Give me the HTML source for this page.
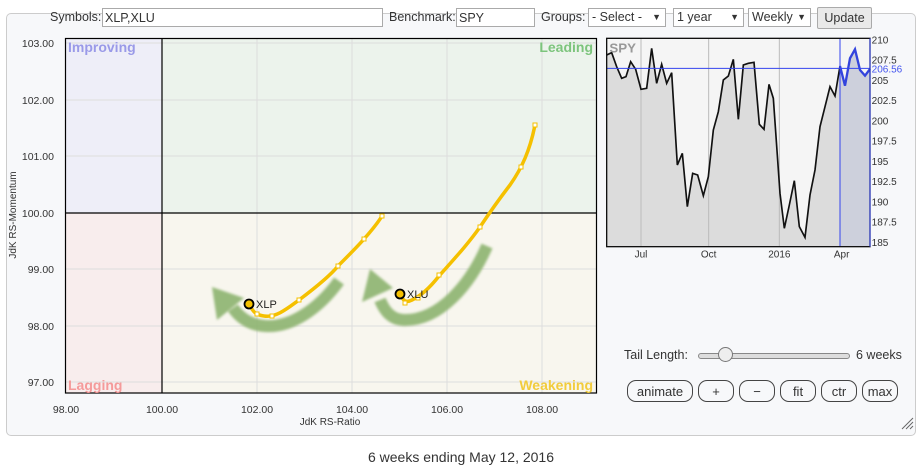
<!DOCTYPE html>
<html><head><meta charset="utf-8"><style>
body{margin:0;width:922px;height:468px;background:#fff;font-family:"Liberation Sans",sans-serif;position:relative;overflow:hidden;color:#333}
.panel{position:absolute;left:6px;top:13px;width:908px;height:421px;border:1px solid #ccc;border-radius:5px;background:#f7f8fa}
.lbl{position:absolute;font-size:12.5px;color:#333}
.inp{position:absolute;height:19px;border:1px solid #aaa;background:#fff;font-size:12.5px;line-height:19px;padding-left:2px;box-sizing:border-box}
.sel{position:absolute;height:19px;border:1px solid #aaa;background:#fff;font-size:12.5px;line-height:17px;padding-left:3px;box-sizing:border-box}
.sel:after{content:"▼";position:absolute;right:4px;top:0;font-size:9px}
.btn{position:absolute;top:380px;height:22px;border:1px solid #444;border-radius:9px;font-size:13px;line-height:21px;text-align:center;box-sizing:border-box;background:#f7f8fa}
</style></head><body>
<div class="panel"></div>
<div class="lbl" style="left:50px;top:10px">Symbols:</div>
<div class="inp" style="left:102px;top:8px;width:281px">XLP,XLU</div>
<div class="lbl" style="left:389px;top:10px">Benchmark:</div>
<div class="inp" style="left:456px;top:8px;width:79px">SPY</div>
<div class="lbl" style="left:541px;top:10px">Groups:</div>
<div class="sel" style="left:588px;top:8px;width:78px">- Select -</div>
<div class="sel" style="left:673px;top:8px;width:71px">1 year</div>
<div class="sel" style="left:748px;top:8px;width:63px">Weekly</div>
<div style="position:absolute;left:817px;top:7px;width:55px;height:22px;border:1px solid #aaa;border-radius:2px;background:#e9e9e9;font-size:12.5px;line-height:21px;text-align:center;box-sizing:border-box">Update</div>

<svg style="position:absolute;left:0;top:0" width="922" height="468">
<defs><filter id="sh" x="-20%" y="-20%" width="140%" height="140%"><feGaussianBlur stdDeviation="1.2"/></filter></defs>
<rect x="65" y="38" width="97" height="175" fill="#eeeef8"/>
<rect x="162" y="38" width="435" height="175" fill="#ecf3ec"/>
<rect x="65" y="213" width="97" height="180" fill="#f8eded"/>
<rect x="162" y="213" width="435" height="180" fill="#f8f6ee"/>
<g stroke="#ddd" stroke-width="1">
<line x1="257" y1="38" x2="257" y2="393"/><line x1="352" y1="38" x2="352" y2="393"/><line x1="447" y1="38" x2="447" y2="393"/><line x1="542" y1="38" x2="542" y2="393"/>
<line x1="65" y1="43" x2="597" y2="43"/><line x1="65" y1="100" x2="597" y2="100"/><line x1="65" y1="156" x2="597" y2="156"/><line x1="65" y1="269" x2="597" y2="269"/><line x1="65" y1="326" x2="597" y2="326"/><line x1="65" y1="382" x2="597" y2="382"/>
</g>
<line x1="162" y1="38" x2="162" y2="393" stroke="#000" stroke-width="1.2"/>
<line x1="65" y1="213" x2="597" y2="213" stroke="#000" stroke-width="1.2"/>
<rect x="65.5" y="38.5" width="531" height="354.5" fill="none" stroke="#000" stroke-width="1.2"/>
<g font-size="14" font-weight="bold">
<text x="68" y="52" fill="#9a9ae8">Improving</text>
<text x="593" y="52" fill="#7cc47c" text-anchor="end">Leading</text>
<text x="68" y="390" fill="#f59a9a">Lagging</text>
<text x="593" y="390" fill="#f2cc3c" text-anchor="end">Weakening</text>
</g>
<g font-size="10.5" fill="#333">
<text x="54" y="47" text-anchor="end">103.00</text><text x="54" y="104" text-anchor="end">102.00</text><text x="54" y="160" text-anchor="end">101.00</text><text x="54" y="217" text-anchor="end">100.00</text><text x="54" y="273" text-anchor="end">99.00</text><text x="54" y="330" text-anchor="end">98.00</text><text x="54" y="386" text-anchor="end">97.00</text>
<text x="66" y="413" text-anchor="middle">98.00</text><text x="162" y="413" text-anchor="middle">100.00</text><text x="257" y="413" text-anchor="middle">102.00</text><text x="352" y="413" text-anchor="middle">104.00</text><text x="447" y="413" text-anchor="middle">106.00</text><text x="542" y="413" text-anchor="middle">108.00</text>
<text x="330" y="425" text-anchor="middle" font-size="10">JdK RS-Ratio</text>
<text transform="translate(16,215) rotate(-90)" text-anchor="middle" font-size="10">JdK RS-Momentum</text>
</g>
<!-- arrows -->
<g opacity="0.9" filter="url(#sh)">
<path d="M339,281 C318,310 290,328 265,326 C250,325 240,318 233,308" fill="none" stroke="#8db46f" stroke-width="12"/>
<path d="M212,287 L217,320 L244,298 Z" fill="#8db46f"/>
<path d="M487,246 C470,285 440,320 405,320 C392,320 385,312 380,300" fill="none" stroke="#8db46f" stroke-width="12"/>
<path d="M370,269 L362,302 L393,288 Z" fill="#8db46f"/>
</g>
<!-- trails -->
<g fill="none" stroke="#f5c000" stroke-width="3.5" stroke-linecap="round">
<path d="M249,304 C253,312 256,315 264,316 C276,318 288,308 299,300 C315,288 330,276 338,266 C350,254 358,246 364,239 C372,230 377,224 382,216"/>
<path d="M400,294 C403,301 406,303 412,300 C420,296 428,290 439,276 C455,258 468,244 480,227 C490,212 500,198 510,185 C522,168 530,150 535,125"/>
</g>
<g fill="#fff" stroke="#f5c000" stroke-width="1">
<rect x="255" y="312" width="4" height="4"/><rect x="270" y="314" width="4" height="4"/><rect x="297" y="298" width="4" height="4"/><rect x="336" y="264" width="4" height="4"/><rect x="362" y="237" width="4" height="4"/><rect x="380" y="214" width="4" height="4"/>
<rect x="403" y="301" width="4" height="4"/><rect x="416" y="296" width="4" height="4"/><rect x="437" y="273" width="4" height="4"/><rect x="478" y="225" width="4" height="4"/><rect x="519" y="165" width="4" height="4"/><rect x="533" y="123" width="4" height="4"/>
</g>
<circle cx="249" cy="304" r="4.5" fill="#f5c000" stroke="#000" stroke-width="1.8"/>
<circle cx="400" cy="294" r="4.5" fill="#f5c000" stroke="#000" stroke-width="1.8"/>
<text x="256" y="308" font-size="11" fill="#222">XLP</text>
<text x="407" y="298" font-size="11" fill="#222">XLU</text>
</svg>

<svg style="position:absolute;left:590px;top:30px" width="320" height="240" viewBox="0 0 960 720">
<rect x="50" y="25" width="790" height="625" fill="#f5f5f5"/>
<path d="M50,75 L65,68 L80,110 L95,145 L108,140 L122,95 L137,118 L153,178 L170,175 L185,55 L200,160 L215,103 L230,160 L245,128 L262,405 L277,370 L292,530 L308,430 L323,435 L340,497 L355,440 L370,300 L385,245 L400,150 L415,138 L430,88 L445,268 L460,105 L475,100 L492,97 L508,283 L522,298 L537,163 L550,205 L570,490 L583,595 L598,525 L613,452 L628,590 L645,622 L660,495 L675,420 L690,290 L705,230 L720,170 L735,198 L750,108 L750,650 L50,650 Z" fill="#dcdcdc"/>
<path d="M750,108 L765,167 L780,85 L795,58 L810,120 L825,137 L840,117 L840,650 L750,650 Z" fill="#cdd0dc"/>
<g stroke="#bbb" stroke-width="3"><line x1="153" y1="25" x2="153" y2="650"/><line x1="356" y1="25" x2="356" y2="650"/><line x1="568" y1="25" x2="568" y2="650"/></g>
<path d="M50,75 L65,68 L80,110 L95,145 L108,140 L122,95 L137,118 L153,178 L170,175 L185,55 L200,160 L215,103 L230,160 L245,128 L262,405 L277,370 L292,530 L308,430 L323,435 L340,497 L355,440 L370,300 L385,245 L400,150 L415,138 L430,88 L445,268 L460,105 L475,100 L492,97 L508,283 L522,298 L537,163 L550,205 L570,490 L583,595 L598,525 L613,452 L628,590 L645,622 L660,495 L675,420 L690,290 L705,230 L720,170 L735,198 L750,108" fill="none" stroke="#111" stroke-width="5"/>
<path d="M750,108 L765,167 L780,85 L795,58 L810,120 L825,137 L840,117" fill="none" stroke="#3344dd" stroke-width="7"/>
<line x1="750" y1="25" x2="750" y2="650" stroke="#3344ee" stroke-width="3"/>
<line x1="50" y1="115" x2="840" y2="115" stroke="#3344ee" stroke-width="3"/>
<rect x="50" y="25" width="790" height="625" fill="none" stroke="#111" stroke-width="4"/>
<line x1="840" y1="25" x2="840" y2="650" stroke="#3344ee" stroke-width="3"/>
<text x="58" y="68" font-size="40" font-weight="bold" fill="#999">SPY</text>
<g font-size="30" fill="#333">
<text x="845" y="40">210</text><text x="845" y="100">207.5</text><text x="845" y="162">205</text><text x="845" y="222">202.5</text><text x="845" y="283">200</text><text x="845" y="343">197.5</text><text x="845" y="405">195</text><text x="845" y="465">192.5</text><text x="845" y="527">190</text><text x="845" y="587">187.5</text><text x="845" y="648">185</text>
<text x="153" y="682" text-anchor="middle">Jul</text><text x="356" y="682" text-anchor="middle">Oct</text><text x="568" y="682" text-anchor="middle">2016</text><text x="755" y="682" text-anchor="middle">Apr</text>
</g>
<text x="845" y="128" font-size="30" fill="#4455ee">206.56</text>
</svg>

<div class="lbl" style="left:624px;top:348px;font-size:12.5px">Tail Length:</div>
<div style="position:absolute;left:698px;top:353px;width:150px;height:4px;border:1px solid #888;border-radius:3px;background:#ddd"></div>
<div style="position:absolute;left:718px;top:347px;width:15px;height:15px;border:1px solid #777;border-radius:50%;background:#eee;box-sizing:border-box"></div>
<div class="lbl" style="left:856px;top:348px;font-size:12.5px">6 weeks</div>
<div class="btn" style="left:627px;width:66px">animate</div>
<div class="btn" style="left:698px;width:36px">+</div>
<div class="btn" style="left:739px;width:36px">−</div>
<div class="btn" style="left:780px;width:36px">fit</div>
<div class="btn" style="left:821px;width:36px">ctr</div>
<div class="btn" style="left:862px;width:36px">max</div>
<svg style="position:absolute;left:900px;top:416px" width="14" height="14"><g stroke="#666" stroke-width="1"><line x1="2" y1="13" x2="13" y2="2"/><line x1="6" y1="13" x2="13" y2="6"/><line x1="10" y1="13" x2="13" y2="10"/></g></svg>
<div style="position:absolute;left:0;width:922px;top:449px;text-align:center;font-size:14px;color:#333">6 weeks ending May 12, 2016</div>
</body></html>
